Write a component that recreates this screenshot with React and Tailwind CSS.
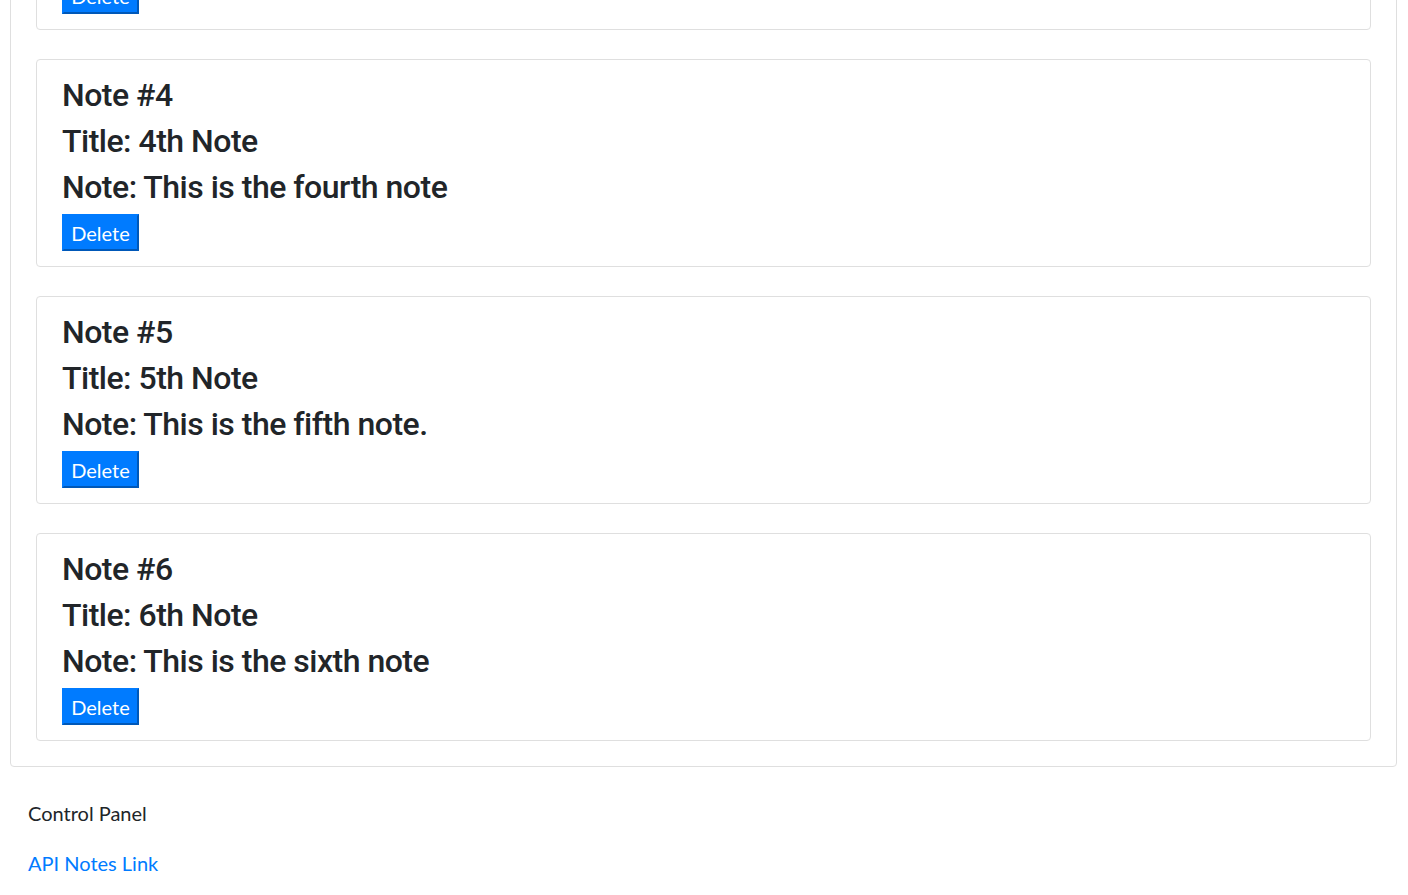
import React from 'react'

const notes = [
  { id: 3, title: '3rd Note', body: 'This is the third note' },
  { id: 4, title: '4th Note', body: 'This is the fourth note' },
  { id: 5, title: '5th Note', body: 'This is the fifth note.' },
  { id: 6, title: '6th Note', body: 'This is the sixth note' },
]

const heading = 'text-[32px] leading-[38px] font-medium tracking-[-0.5px] mb-[8px] font-[Roboto,sans-serif]'

const NoteCard = ({ note }) => (
  <div className="border border-[#dfdfdf] rounded-[4px] bg-white pl-[25px] pr-[25px] pt-[16px] pb-[14px] h-[208px]">
    <h2 className={heading}>Note #{note.id}</h2>
    <h2 className={heading}>Title: {note.title}</h2>
    <h2 className={heading}>Note: {note.body}</h2>
    <button className="w-[77px] h-[37px] flex items-center justify-center bg-[#007bff] text-white text-[20px] leading-none border-2 border-[#007bff] border-r-[#0058b8] border-b-[#0058b8]">
      Delete
    </button>
  </div>
)

export default function App() {
  return (
    <div
      className="min-h-screen bg-white text-[#212529] overflow-hidden"
      style={{ fontFamily: 'Lato, "Noto Sans", sans-serif' }}
    >
      <div className="ml-[10px] mr-[11px] -mt-[204px] border border-[#dfdfdf] rounded-[4px] px-[25px] py-[25px] flex flex-col gap-[29px]">
        {notes.map((note) => (
          <NoteCard key={note.id} note={note} />
        ))}
      </div>
      <div className="pl-[28px] pt-[31px] text-[20px] leading-[30px]">
        <p className="mb-[20px]">Control Panel</p>
        <a href="#" className="text-[#007bff]">API Notes Link</a>
      </div>
    </div>
  )
}
